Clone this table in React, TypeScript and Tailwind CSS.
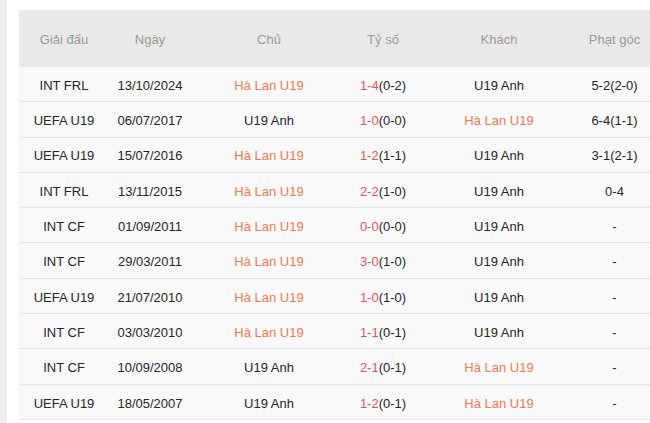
import React from "react";

type Match = {
  league: string;
  date: string;
  home: string;
  score: string;
  half: string;
  away: string;
  corner: string;
};

const TEAM = "Hà Lan U19";

const matches: Match[] = [
  { league: "INT FRL", date: "13/10/2024", home: "Hà Lan U19", score: "1-4", half: "(0-2)", away: "U19 Anh", corner: "5-2(2-0)" },
  { league: "UEFA U19", date: "06/07/2017", home: "U19 Anh", score: "1-0", half: "(0-0)", away: "Hà Lan U19", corner: "6-4(1-1)" },
  { league: "UEFA U19", date: "15/07/2016", home: "Hà Lan U19", score: "1-2", half: "(1-1)", away: "U19 Anh", corner: "3-1(2-1)" },
  { league: "INT FRL", date: "13/11/2015", home: "Hà Lan U19", score: "2-2", half: "(1-0)", away: "U19 Anh", corner: "0-4" },
  { league: "INT CF", date: "01/09/2011", home: "Hà Lan U19", score: "0-0", half: "(0-0)", away: "U19 Anh", corner: "-" },
  { league: "INT CF", date: "29/03/2011", home: "Hà Lan U19", score: "3-0", half: "(1-0)", away: "U19 Anh", corner: "-" },
  { league: "UEFA U19", date: "21/07/2010", home: "Hà Lan U19", score: "1-0", half: "(1-0)", away: "U19 Anh", corner: "-" },
  { league: "INT CF", date: "03/03/2010", home: "Hà Lan U19", score: "1-1", half: "(0-1)", away: "U19 Anh", corner: "-" },
  { league: "INT CF", date: "10/09/2008", home: "U19 Anh", score: "2-1", half: "(0-1)", away: "Hà Lan U19", corner: "-" },
  { league: "UEFA U19", date: "18/05/2007", home: "U19 Anh", score: "1-2", half: "(0-1)", away: "Hà Lan U19", corner: "-" },
];

const cols = "grid grid-cols-[90px_82px_156px_72px_160px_71px]";

function Team({ name }: { name: string }) {
  return <span className={name === TEAM ? "text-[#ee7a52]" : "text-[#262626]"}>{name}</span>;
}

export default function App() {
  return (
    <div className="flex w-[650px] h-[423px] overflow-hidden bg-white text-[13px] font-['Liberation_Sans',Arial,sans-serif]">
      <div className="w-[7px] shrink-0 bg-[#ececec]" />
      <div className="w-[12px] shrink-0" />
      <div className="flex-1 pt-[10px]">
        <div className={`${cols} h-[57px] pt-[2px] items-center bg-[#e9e9e9] text-[#999] text-center`}>
          <div>Giải đấu</div>
          <div>Ngày</div>
          <div>Chủ</div>
          <div>Tỷ số</div>
          <div>Khách</div>
          <div>Phạt góc</div>
        </div>
        {matches.map((m, i) => (
          <div
            key={i}
            className={`${cols} h-[35.3px] pt-[3px] items-center bg-[#f9f9f9] border-b border-[#e6e6e6] text-[#262626] text-center`}
          >
            <div>{m.league}</div>
            <div>{m.date}</div>
            <div><Team name={m.home} /></div>
            <div>
              <span className="text-[#e0585c]">{m.score}</span>
              {m.half}
            </div>
            <div><Team name={m.away} /></div>
            <div>{m.corner}</div>
          </div>
        ))}
      </div>
    </div>
  );
}
